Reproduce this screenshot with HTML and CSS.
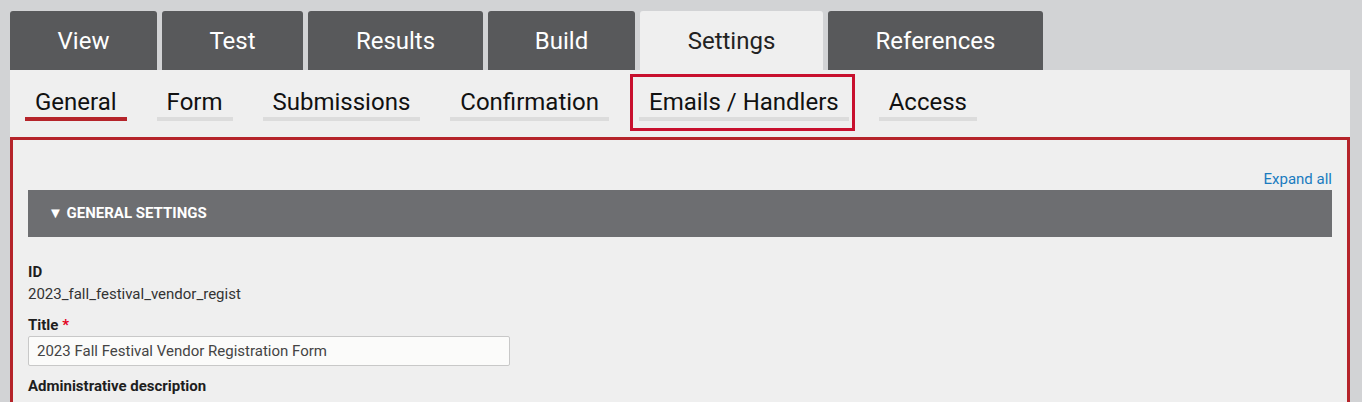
FILE: index.html
```html
<!DOCTYPE html>
<html lang="en">
<head>
    <meta charset="UTF-8">
    <title>Webform Settings</title>
    <link rel="stylesheet" href="styles.css">
</head>
<body>
    <div class="page">
        <nav class="tabs">
            <a class="tab tab-view">View</a>
            <a class="tab tab-test">Test</a>
            <a class="tab tab-results">Results</a>
            <a class="tab tab-build">Build</a>
            <a class="tab tab-settings active">Settings</a>
            <a class="tab tab-refs">References</a>
        </nav>

        <div class="panel">
            <nav class="subtabs">
                <a class="subtab active">General</a>
                <a class="subtab">Form</a>
                <a class="subtab">Submissions</a>
                <a class="subtab">Confirmation</a>
                <span class="highlight"><a class="subtab">Emails / Handlers</a></span>
                <a class="subtab">Access</a>
            </nav>

            <div class="content">
                <div class="expand-row"><a class="expand-link">Expand all</a></div>
                <div class="details-bar">&#9660; GENERAL SETTINGS</div>

                <div class="field">
                    <div class="label">ID</div>
                    <div class="value">2023_fall_festival_vendor_regist</div>
                </div>
                <div class="field">
                    <div class="label">Title <span class="required">*</span></div>
                    <input class="text-input" type="text" value="2023 Fall Festival Vendor Registration Form">
                </div>
                <div class="field">
                    <div class="label">Administrative description</div>
                </div>
            </div>
        </div>
    </div>
</body>
</html>
```

FILE: styles.css
```css
body {
    margin: 0;
    background-color: #d2d3d5;
    font-family: Roboto, "Liberation Sans", sans-serif;
    color: #222;
    overflow: hidden;
}

.page {
    padding: 11px 12px 0 10px;
}

.tabs {
    display: flex;
    gap: 5px;
    height: 59px;
}

.tab {
    display: flex;
    align-items: center;
    justify-content: center;
    background-color: #58595b;
    color: #fff;
    font-size: 24px;
    border-radius: 3px 3px 0 0;
    padding-top: 1px;
}

.tab-view { width: 147px; }
.tab-test { width: 141px; }
.tab-results { width: 175px; }
.tab-build { width: 147px; }
.tab-settings { width: 183px; }
.tab-refs { width: 215px; }

.tab.active {
    background-color: #efefef;
    color: #222;
}

.panel {
    background-color: #efefef;
    height: 340px;
    overflow: hidden;
}

.subtabs {
    display: flex;
    align-items: flex-start;
    gap: 30px;
    padding: 4px 0 0 15px;
    height: 63px;
}

.subtab {
    display: block;
    font-size: 24px;
    color: #111;
    padding: 14px 10px 1px;
    border-bottom: 4px solid #dcdcdc;
    line-height: 28px;
}

.subtab.active {
    border-bottom-color: #b5242a;
}

.highlight {
    border: 3px solid #c8102e;
    padding: 0 3px 7px 6px;
    margin: 0 -6px 0 -9px;
}

.highlight .subtab {
    padding-top: 11px;
}

.content {
    border: 3px solid #b5242a;
    border-bottom: none;
    padding: 29px 15px 0;
    height: 300px;
}

.expand-row {
    text-align: right;
    height: 21px;
}

.expand-link {
    color: #1a7bbf;
    font-size: 15px;
    line-height: 20px;
}

.details-bar {
    background-color: #6d6e71;
    color: #fff;
    font-size: 15px;
    font-weight: bold;
    height: 47px;
    line-height: 46px;
    padding-left: 20px;
    margin-bottom: 25px;
}

.field {
    margin-bottom: 10px;
}

.label {
    font-size: 15px;
    font-weight: bold;
    color: #1e1e1e;
    line-height: 21px;
}

.required {
    color: #e3001b;
}

.value {
    font-size: 15px;
    color: #333;
    line-height: 22px;
}

.text-input {
    display: block;
    box-sizing: border-box;
    width: 482px;
    height: 30px;
    padding: 0 8px;
    border: 1px solid #c8c8c8;
    border-radius: 2px;
    background-color: #fbfbfa;
    font-family: Roboto, "Liberation Sans", sans-serif;
    font-size: 15px;
    color: #444;
}
```
